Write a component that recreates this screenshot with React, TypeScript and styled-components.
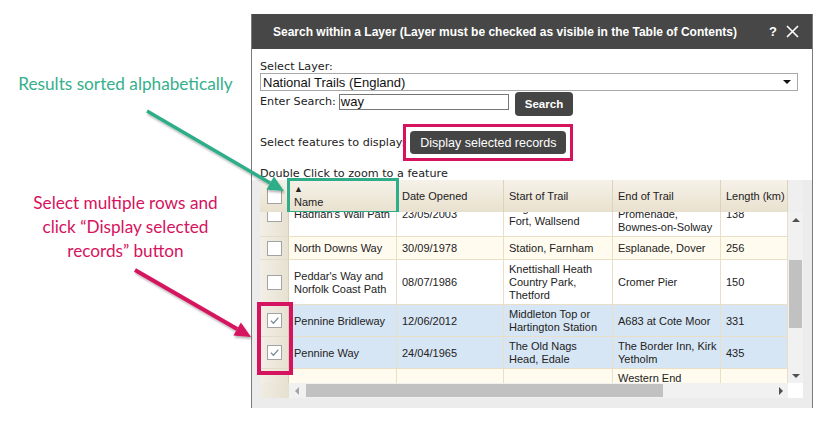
import React from "react";
import styled, { createGlobalStyle } from "styled-components";

const GREEN = "#2fad89";
const MAGENTA = "#d5135e";
const COLS = "29px 108px 107px 109px 108px 67px";

const GlobalStyle = createGlobalStyle`
  html, body { margin: 0; padding: 0; background: #ffffff; }
  body { font-family: "Liberation Sans", Arial, sans-serif; }
`;

const Page = styled.div`
  position: relative;
  width: 828px;
  height: 422px;
  display: flex;
  overflow: hidden;
  background: #ffffff;
`;

const Notes = styled.div`
  width: 251px;
  flex: none;
  display: flex;
  flex-direction: column;
  align-items: center;
  padding-top: 72px;
  box-sizing: border-box;
  font-family: Lato, "Open Sans", sans-serif;
  font-size: 17.2px;
  line-height: 24px;
`;

const Note = styled.div<{ $color: string; $gap: number }>`
  color: ${(p) => p.$color};
  margin-top: ${(p) => p.$gap}px;
  text-align: center;
`;

const Dialog = styled.div`
  margin-top: 14px;
  width: 562px;
  height: 394px;
  box-sizing: border-box;
  border: 1px solid #7a7a7a;
  border-top: none;
  display: flex;
  flex-direction: column;
  background: #ffffff;
`;

const TitleBar = styled.div`
  height: 35px;
  flex: none;
  background: #474747;
  display: flex;
  align-items: center;
  padding: 0 13px 0 21px;
  color: #ffffff;
`;

const Title = styled.div`
  flex: 1;
  font-weight: bold;
  font-size: 12px;
`;

const Help = styled.span`
  font-weight: bold;
  font-size: 13px;
  margin-right: 9px;
`;

const Form = styled.div`
  display: flex;
  flex-direction: column;
  padding: 12px 14px 0 8px;
  font-family: "DejaVu Sans", Verdana, sans-serif;
  font-size: 11.2px;
  color: #222222;
`;

const Label = styled.div<{ $top?: number }>`
  line-height: 12px;
  margin-top: ${(p) => p.$top ?? 0}px;
  white-space: nowrap;
`;

const SelectBox = styled.div`
  height: 18px;
  box-sizing: border-box;
  border: 1px solid #a9a9a9;
  background: #ffffff;
  display: flex;
  align-items: center;
  justify-content: space-between;
  padding: 0 6px 0 2px;
  font-family: "Liberation Sans", Arial, sans-serif;
  font-size: 13px;
  color: #111111;
`;

const SearchRow = styled.div`
  margin-top: 1px;
  height: 24px;
  display: flex;
  align-items: flex-start;
`;

const SearchInput = styled.div`
  margin-top: 2px;
  margin-left: 3px;
  width: 170px;
  height: 16px;
  box-sizing: border-box;
  border: 1px solid #767676;
  background: #ffffff;
  padding: 0 1px;
  font-family: "Liberation Sans", Arial, sans-serif;
  font-size: 13px;
  line-height: 14px;
  color: #111111;
`;

const DarkButton = styled.div<{ $bold?: boolean; $h: number }>`
  height: ${(p) => p.$h}px;
  box-sizing: border-box;
  padding: 0 10px;
  background: #454545;
  border-radius: 4px;
  color: #ffffff;
  display: flex;
  align-items: center;
  font-family: "Liberation Sans", Arial, sans-serif;
  font-size: ${(p) => (p.$bold ? 11.5 : 12.5)}px;
  font-weight: ${(p) => (p.$bold ? "bold" : "normal")};
  white-space: nowrap;
`;

const SearchButton = styled(DarkButton)`
  margin-left: 6px;
`;

const FeatureRow = styled.div`
  margin-top: 8px;
  display: flex;
  align-items: center;
`;

const Highlight = styled.div`
  margin-left: -2px;
  border: 3px solid ${MAGENTA};
  padding: 4px;
`;

const Panel = styled.div`
  flex: 1;
  background: #ececec;
  padding: 0 9px 10px 8px;
  display: grid;
  grid-template-columns: 528px 15px;
  grid-template-rows: 32px 171px 15px;
`;

const HeaderRow = styled.div`
  display: grid;
  grid-template-columns: ${COLS};
  background: linear-gradient(#f6f2e9, #e8e1ce);
  font-size: 11px;
  line-height: 13px;
  color: #222222;
`;

const HeaderCell = styled.div<{ $outlined?: boolean }>`
  border-right: 1px solid #ddd3ba;
  padding: 0 5px;
  display: flex;
  flex-direction: column;
  justify-content: center;
  white-space: nowrap;
  overflow: hidden;
  ${(p) => (p.$outlined ? `overflow: visible; outline: 3px solid ${GREEN}; outline-offset: -1px;` : "")}
`;

const CheckHeaderCell = styled(HeaderCell)`
  align-items: center;
  padding: 0;
`;

const SortMark = styled.span`
  font-size: 9px;
  line-height: 13px;
`;

const Spacer = styled.div`
  background: #efefef;
`;

const Viewport = styled.div`
  overflow: hidden;
  background: #ffffff;
`;

const Scrolled = styled.div<{ $scroll: number }>`
  margin-top: -${(p) => p.$scroll}px;
`;

const TONES = { white: "#ffffff", cream: "#fffbef", selected: "#d7e6f5" };
type Tone = keyof typeof TONES;

const Row = styled.div<{ $tone: Tone }>`
  display: grid;
  grid-template-columns: ${COLS};
  background: ${(p) => TONES[p.$tone]};
  font-size: 11px;
  line-height: 13px;
  color: #222222;
`;

const Cell = styled.div`
  border-right: 1px solid #eadfc6;
  border-bottom: 1px solid #eadfc6;
  padding: 3px 5px 2px;
  display: flex;
  flex-direction: column;
  justify-content: center;
  white-space: nowrap;
  overflow: hidden;
`;

const CheckCell = styled.div`
  min-height: 22px;
  border-right: 1px solid #d8cfb7;
  border-bottom: 1px solid #e3dccb;
  background: linear-gradient(90deg, #f3efe6, #e7e1d1);
  display: flex;
  align-items: center;
  justify-content: center;
`;

const Box = styled.div`
  width: 15px;
  height: 15px;
  box-sizing: border-box;
  border: 1px solid #a3a3a3;
  background: #ffffff;
  display: flex;
  align-items: center;
  justify-content: center;
`;

const VScroll = styled.div`
  background: #f1f1f1;
  display: flex;
  flex-direction: column;
`;

const ArrowBox = styled.div`
  width: 15px;
  height: 15px;
  flex: none;
  display: flex;
  align-items: center;
  justify-content: center;
`;

const VTrack = styled.div`
  flex: 1;
  padding: 0 1px;
`;

const VThumb = styled.div<{ $top: number; $len: number }>`
  margin-top: ${(p) => p.$top}px;
  height: ${(p) => p.$len}px;
  background: #c1c1c1;
`;

const HScroll = styled.div`
  display: flex;
`;

const FrozenStub = styled.div`
  width: 29px;
  flex: none;
  background: linear-gradient(90deg, #f0ece2, #e6e0d0);
`;

const HTrack = styled.div`
  flex: 1;
  background: #f1f1f1;
  display: flex;
  align-items: stretch;
`;

const HThumb = styled.div<{ $left: number; $len: number }>`
  margin: 1px 0 1px ${(p) => p.$left}px;
  width: ${(p) => p.$len}px;
  background: #c1c1c1;
`;

const HFill = styled.div`
  flex: 1;
`;

const Corner = styled.div`
  background: #ffffff;
`;

const Overlay = styled.svg`
  position: absolute;
  left: 0;
  top: 0;
  width: 828px;
  height: 422px;
  pointer-events: none;
`;

const Tri = ({ dir, color }: { dir: "up" | "down" | "left" | "right"; color: string }) => {
  const pts = {
    up: "0,5 4,1 8,5",
    down: "0,1 8,1 4,5",
    left: "5,0 5,8 1,4",
    right: "1,0 1,8 5,4",
  }[dir];
  const vertical = dir === "up" || dir === "down";
  return (
    <svg width={vertical ? 8 : 6} height={vertical ? 6 : 8} viewBox={vertical ? "0 0 8 6" : "0 0 6 8"}>
      <polygon points={pts} fill={color} />
    </svg>
  );
};

const Checkbox = ({ checked }: { checked?: boolean }) => (
  <Box>
    {checked && (
      <svg width="11" height="11" viewBox="0 0 11 11">
        <path d="M1.8 5.6 L4.4 8.2 L9.4 2.6" fill="none" stroke="#7d8a9c" strokeWidth="1.3" />
      </svg>
    )}
  </Box>
);

const Lines = ({ lines }: { lines: string[] }) => (
  <>
    {lines.map((l, i) => (
      <div key={i}>{l}</div>
    ))}
  </>
);

type Rec = {
  name: string[];
  date: string;
  start: string[];
  end: string[];
  len: string;
  tone: Tone;
  checked?: boolean;
};

const rows: Rec[] = [
  {
    name: ["Hadrian's Wall Path"],
    date: "23/05/2003",
    start: ["Segedunum Roman", "Fort, Wallsend"],
    end: ["\u00a0", "Promenade,", "Bownes-on-Solway"],
    len: "138",
    tone: "white",
  },
  {
    name: ["North Downs Way"],
    date: "30/09/1978",
    start: ["Station, Farnham"],
    end: ["Esplanade, Dover"],
    len: "256",
    tone: "cream",
  },
  {
    name: ["Peddar's Way and", "Norfolk Coast Path"],
    date: "08/07/1986",
    start: ["Knettishall Heath", "Country Park,", "Thetford"],
    end: ["Cromer Pier"],
    len: "150",
    tone: "white",
  },
  {
    name: ["Pennine Bridleway"],
    date: "12/06/2012",
    start: ["Middleton Top or", "Hartington Station"],
    end: ["A683 at Cote Moor"],
    len: "331",
    tone: "selected",
    checked: true,
  },
  {
    name: ["Pennine Way"],
    date: "24/04/1965",
    start: ["The Old Nags", "Head, Edale"],
    end: ["The Border Inn, Kirk", "Yetholm"],
    len: "435",
    tone: "selected",
    checked: true,
  },
  {
    name: ["South Downs Way"],
    date: "15/07/1972",
    start: ["Eastbourne"],
    end: ["Western End", "of the High Street,", "Winchester"],
    len: "160",
    tone: "cream",
  },
];

const arrowHead = (x1: number, y1: number, x2: number, y2: number, len: number, half: number) => {
  const dx = x2 - x1;
  const dy = y2 - y1;
  const d = Math.hypot(dx, dy);
  const ux = dx / d;
  const uy = dy / d;
  const bx = x2 - ux * len;
  const by = y2 - uy * len;
  const px = -uy * half;
  const py = ux * half;
  return {
    base: [bx, by],
    points: `${x2},${y2} ${bx + px},${by + py} ${bx - px},${by - py}`,
  };
};

const Arrow = ({ x1, y1, x2, y2, color, w }: { x1: number; y1: number; x2: number; y2: number; color: string; w: number }) => {
  const h = arrowHead(x1, y1, x2, y2, 16, 7.5);
  return (
    <g filter="url(#shadow)">
      <line x1={x1} y1={y1} x2={h.base[0]} y2={h.base[1]} stroke={color} strokeWidth={w} />
      <polygon points={h.points} fill={color} />
    </g>
  );
};

export default function App() {
  return (
    <Page>
      <GlobalStyle />
      <Notes>
        <Note $color="#36af8c" $gap={0}>Results sorted alphabetically</Note>
        <Note $color={MAGENTA} $gap={95}>
          Select multiple rows and
          <br />
          click “Display selected
          <br />
          records” button
        </Note>
      </Notes>

      <Dialog>
        <TitleBar>
          <Title>Search within a Layer (Layer must be checked as visible in the Table of Contents)</Title>
          <Help>?</Help>
          <svg width="13" height="13" viewBox="0 0 13 13">
            <path d="M1 1 L12 12 M12 1 L1 12" stroke="#ffffff" strokeWidth="1.6" />
          </svg>
        </TitleBar>

        <Form>
          <Label>Select Layer:</Label>
          <SelectBox>
            <span>National Trails (England)</span>
            <Tri dir="down" color="#111111" />
          </SelectBox>
          <SearchRow>
            <Label $top={4}>Enter Search:</Label>
            <SearchInput>way</SearchInput>
            <SearchButton $bold $h={24}>Search</SearchButton>
          </SearchRow>
          <FeatureRow>
            <Label>Select features to display:</Label>
            <Highlight>
              <DarkButton $h={23}>Display selected records</DarkButton>
            </Highlight>
          </FeatureRow>
          <Label $top={7}>Double Click to zoom to a feature</Label>
        </Form>

        <Panel>
          <HeaderRow>
            <CheckHeaderCell>
              <Checkbox />
            </CheckHeaderCell>
            <HeaderCell $outlined>
              <SortMark>▲</SortMark>
              <span>Name</span>
            </HeaderCell>
            <HeaderCell>Date Opened</HeaderCell>
            <HeaderCell>Start of Trail</HeaderCell>
            <HeaderCell>End of Trail</HeaderCell>
            <HeaderCell>Length (km)</HeaderCell>
          </HeaderRow>
          <Spacer />

          <Viewport>
            <Scrolled $scroll={20}>
              {rows.map((r, i) => (
                <Row key={i} $tone={r.tone}>
                  <CheckCell>
                    <Checkbox checked={r.checked} />
                  </CheckCell>
                  <Cell>
                    <Lines lines={r.name} />
                  </Cell>
                  <Cell>{r.date}</Cell>
                  <Cell>
                    <Lines lines={r.start} />
                  </Cell>
                  <Cell>
                    <Lines lines={r.end} />
                  </Cell>
                  <Cell>{r.len}</Cell>
                </Row>
              ))}
            </Scrolled>
          </Viewport>
          <VScroll>
            <ArrowBox>
              <Tri dir="up" color="#505050" />
            </ArrowBox>
            <VTrack>
              <VThumb $top={33} $len={68} />
            </VTrack>
            <ArrowBox>
              <Tri dir="down" color="#505050" />
            </ArrowBox>
          </VScroll>

          <HScroll>
            <FrozenStub />
            <HTrack>
              <ArrowBox>
                <Tri dir="left" color="#a3a3a3" />
              </ArrowBox>
              <HThumb $left={2} $len={357} />
              <HFill />
              <ArrowBox>
                <Tri dir="right" color="#505050" />
              </ArrowBox>
            </HTrack>
          </HScroll>
          <Corner />
        </Panel>
      </Dialog>

      <Overlay viewBox="0 0 828 422">
        <defs>
          <filter id="shadow" x="-10%" y="-10%" width="130%" height="140%">
            <feDropShadow dx="1" dy="2" stdDeviation="1.2" floodColor="#000000" floodOpacity="0.3" />
          </filter>
        </defs>
        <Arrow x1={147} y1={111} x2={284} y2={191} color={GREEN} w={3.5} />
        <Arrow x1={135} y1={270} x2={251} y2={337} color={MAGENTA} w={4} />
        <rect x={259} y={304} width={32} height={69} fill="none" stroke={MAGENTA} strokeWidth={4} />
      </Overlay>
    </Page>
  );
}
